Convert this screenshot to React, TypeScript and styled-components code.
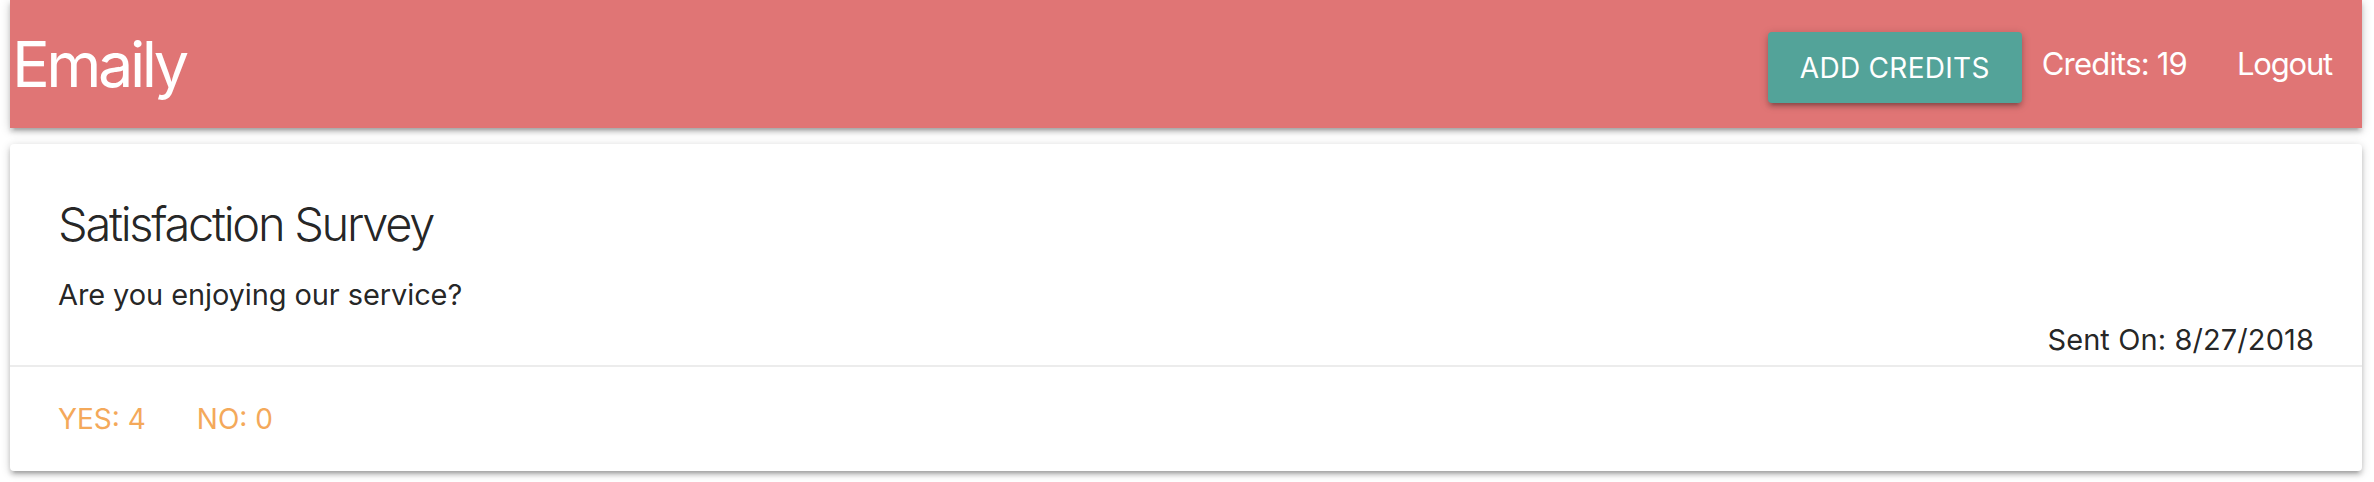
import React from "react";
import styled, { createGlobalStyle } from "styled-components";

const GlobalStyle = createGlobalStyle`
  html, body { margin: 0; padding: 0; background: #ffffff; }
  body { font-family: Inter, Roboto, "Noto Sans", sans-serif; color: rgba(0,0,0,0.87); -webkit-font-smoothing: antialiased; }
  * { box-sizing: border-box; }
`;

const shadow =
  "0 4px 4px 0 rgba(0,0,0,0.14), 0 6px 2px -4px rgba(0,0,0,0.12), 0 2px 10px 0 rgba(0,0,0,0.2)";

const Page = styled.div`
  padding: 0 12px 0 10px;
  height: 482px;
  overflow: hidden;
`;

const Nav = styled.nav`
  height: 128px;
  background: #e07575;
  box-shadow: ${shadow};
  display: flex;
  align-items: center;
  justify-content: space-between;
  color: #fff;
`;

const Brand = styled.a`
  font-size: 63px;
  line-height: 128px;
  letter-spacing: -3.5px;
  color: #fff;
  text-decoration: none;
  padding-left: 2px;
`;

const Menu = styled.ul`
  list-style: none;
  margin: 0;
  padding: 0;
  display: flex;
  align-items: center;
  height: 128px;
`;

const Item = styled.li<{ $mx?: number }>`
  margin: 0 ${(p) => p.$mx ?? 0}px;
  font-size: 31px;
  letter-spacing: -0.8px;
  line-height: 128px;
  display: flex;
  align-items: center;
`;

const NavLink = styled.a`
  color: #fff;
  text-decoration: none;
  padding: 0 30px;
  font-size: 31px;
  letter-spacing: -1.2px;
`;

const Button = styled.button`
  height: 71px;
  margin-top: 7px;
  padding: 0 32px;
  border: none;
  border-radius: 4px;
  background: #53a399;
  color: #fff;
  font-family: inherit;
  font-size: 28px;
  letter-spacing: 0.3px;
  text-transform: uppercase;
  box-shadow: ${shadow};
  cursor: pointer;
`;

const Card = styled.div`
  margin: 16px 0 0;
  background: #fff;
  border-radius: 4px;
  box-shadow: ${shadow};
`;

const CardContent = styled.div`
  padding: 48px 48px 3px;
  display: flex;
  flex-direction: column;
`;

const CardTitle = styled.span`
  font-size: 47px;
  font-weight: 300;
  line-height: 64px;
  letter-spacing: -2.3px;
  margin-bottom: 16px;
  color: rgba(0,0,0,0.87);
`;

const Text = styled.p<{ $right?: boolean }>`
  margin: 0;
  font-size: 29px;
  line-height: 45px;
  letter-spacing: ${(p) => (p.$right ? "0.1px" : "-0.1px")};
  text-align: ${(p) => (p.$right ? "right" : "left")};
  color: rgba(0,0,0,0.87);
`;

const CardAction = styled.div`
  border-top: 2px solid rgba(160,160,160,0.2);
  padding: 31px 48px 31px;
  display: flex;
  gap: 51px;
`;

const ActionLink = styled.a`
  color: #f4a95a;
  font-size: 28px;
  line-height: 42px;
  text-transform: uppercase;
  text-decoration: none;
`;

export default function App() {
  return (
    <Page>
      <GlobalStyle />
      <Nav>
        <Brand href="#">Emaily</Brand>
        <Menu>
          <Item>
            <Button>Add Credits</Button>
          </Item>
          <Item $mx={20}>Credits: 19</Item>
          <Item>
            <NavLink href="#">Logout</NavLink>
          </Item>
        </Menu>
      </Nav>
      <Card>
        <CardContent>
          <CardTitle>Satisfaction Survey</CardTitle>
          <Text>Are you enjoying our service?</Text>
          <Text $right>Sent On: 8/27/2018</Text>
        </CardContent>
        <CardAction>
          <ActionLink href="#">Yes: 4</ActionLink>
          <ActionLink href="#">No: 0</ActionLink>
        </CardAction>
      </Card>
    </Page>
  );
}
